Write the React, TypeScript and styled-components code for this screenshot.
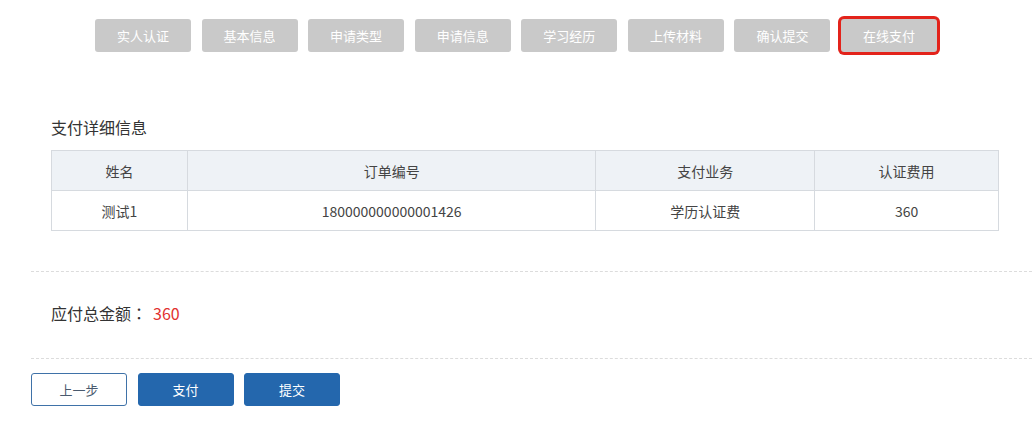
import { styled, createGlobalStyle } from "styled-components";

const GlobalStyle = createGlobalStyle`
  html, body {
    margin: 0;
    padding: 0;
    background: #fff;
    font-family: "Noto Sans CJK SC", "Noto Sans", "Liberation Sans", sans-serif;
    color: #333;
  }
`;

const Page = styled.div`
  width: 1032px;
  height: 432px;
  overflow: hidden;
  padding-top: 19px;
  box-sizing: border-box;
`;

const StepBar = styled.div`
  display: flex;
  justify-content: center;
  gap: 10.6px;
`;

const Step = styled.div<{ active?: boolean }>`
  width: 96px;
  height: 33px;
  border-radius: 3px;
  background: #c9c9c9;
  color: #fff;
  font-size: 13px;
  display: flex;
  align-items: center;
  justify-content: center;
  box-shadow: ${({ active }) => (active ? "0 0 0 3px #e3231b" : "none")};
`;

const Content = styled.div`
  padding-left: 31px;
`;

const Section = styled.div`
  padding-left: 20px;
  padding-right: 33px;
`;

const SectionTitle = styled.div`
  margin-top: 65px;
  font-size: 16px;
  line-height: 20px;
  color: #333;
`;

const Table = styled.table`
  margin-top: 13px;
  width: 948px;
  border-collapse: collapse;
  font-size: 14px;
  color: #444;
  td,
  th {
    border: 1px solid #d6dadf;
    height: 39px;
    padding: 0;
    text-align: center;
    font-weight: normal;
  }
  th {
    background: #eef2f6;
  }
`;

const Dashed = styled.div<{ gap: number }>`
  margin-top: ${({ gap }) => gap}px;
  border-top: 1px dashed #dcdcdc;
`;

const Total = styled.div`
  margin-top: 30px;
  font-size: 16px;
  line-height: 22px;
  color: #333;
`;

const Colon = styled.span`
  font-family: "Noto Sans CJK TC", "Noto Sans CJK SC", sans-serif;
`;

const Amount = styled.span`
  margin-left: 6px;
  color: #e2312f;
`;

const Actions = styled.div`
  display: flex;
  gap: 10.5px;
  margin-top: 14px;
`;

const ActionButton = styled.div<{ primary?: boolean }>`
  width: 96px;
  height: 33px;
  box-sizing: border-box;
  border-radius: 3px;
  font-size: 13px;
  display: flex;
  align-items: center;
  justify-content: center;
  background: ${({ primary }) => (primary ? "#2467ad" : "#fff")};
  color: ${({ primary }) => (primary ? "#fff" : "#4a5a6e")};
  border: 1px solid ${({ primary }) => (primary ? "#2467ad" : "#3f72a8")};
`;

const steps = [
  "实人认证",
  "基本信息",
  "申请类型",
  "申请信息",
  "学习经历",
  "上传材料",
  "确认提交",
  "在线支付",
];

const columns = [
  { title: "姓名", width: 136 },
  { title: "订单编号", width: 409 },
  { title: "支付业务", width: 219 },
  { title: "认证费用", width: 184 },
];

const row = ["测试1", "180000000000001426", "学历认证费", "360"];

export default function App() {
  return (
    <>
      <GlobalStyle />
      <Page>
        <StepBar>
          {steps.map((s, i) => (
            <Step key={s} active={i === steps.length - 1}>
              {s}
            </Step>
          ))}
        </StepBar>
        <Content>
          <Section>
            <SectionTitle>支付详细信息</SectionTitle>
            <Table>
              <colgroup>
                {columns.map((c) => (
                  <col key={c.title} style={{ width: c.width }} />
                ))}
              </colgroup>
              <thead>
                <tr>
                  {columns.map((c) => (
                    <th key={c.title}>{c.title}</th>
                  ))}
                </tr>
              </thead>
              <tbody>
                <tr>
                  {row.map((v) => (
                    <td key={v}>{v}</td>
                  ))}
                </tr>
              </tbody>
            </Table>
          </Section>
          <Dashed gap={40} />
          <Section>
            <Total>
              应付总金额<Colon>：</Colon>
              <Amount>360</Amount>
            </Total>
          </Section>
          <Dashed gap={34} />
          <Actions>
            <ActionButton>上一步</ActionButton>
            <ActionButton primary>支付</ActionButton>
            <ActionButton primary>提交</ActionButton>
          </Actions>
        </Content>
      </Page>
    </>
  );
}
